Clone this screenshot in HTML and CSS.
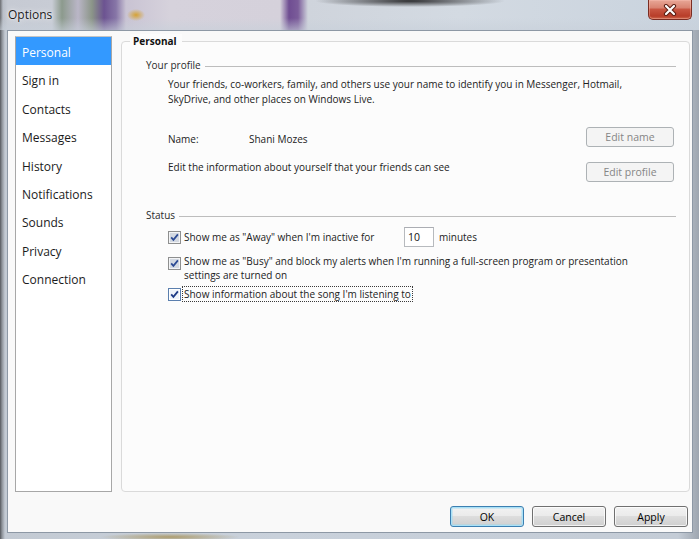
FILE: index.html
```html
<!DOCTYPE html>
<html lang="en">
<head>
<meta charset="utf-8">
<title>Options</title>
<link rel="stylesheet" href="styles.css">
</head>
<body>
<div class="window">
  <header class="titlebar">
    <span class="title">Options</span>
    <button class="close" type="button" aria-label="Close">
      <svg width="14" height="12" viewBox="0 0 14 12">
        <path d="M3 2 L11 10 M11 2 L3 10" stroke="#5a1d12" stroke-width="4.2" stroke-linecap="round" fill="none"/>
        <path d="M3 2 L11 10 M11 2 L3 10" stroke="#ffffff" stroke-width="2.2" stroke-linecap="round" fill="none"/>
      </svg>
    </button>
  </header>

  <div class="client">
    <div class="main">
      <ul class="nav">
        <li class="selected">Personal</li>
        <li>Sign in</li>
        <li>Contacts</li>
        <li>Messages</li>
        <li>History</li>
        <li>Notifications</li>
        <li>Sounds</li>
        <li>Privacy</li>
        <li>Connection</li>
      </ul>

      <section class="panel">
        <h1 class="panel-title">Personal</h1>

        <div class="group-head"><span>Your profile</span><span class="rule"></span></div>
        <div class="group-body">
          <p class="intro">Your friends, co-workers, family, and others use your name to identify you in Messenger, Hotmail,<br>SkyDrive, and other places on Windows Live.</p>
          <div class="row name-row">
            <span class="label">Name:</span>
            <span class="value">Shani Mozes</span>
            <button class="btn side disabled" type="button">Edit name</button>
          </div>
          <div class="row profile-row">
            <span class="value profile-text">Edit the information about yourself that your friends can see</span>
            <button class="btn side disabled" type="button">Edit profile</button>
          </div>
        </div>

        <div class="group-head status-head"><span>Status</span><span class="rule"></span></div>
        <div class="group-body">
          <div class="check check-away">
            <svg class="box" width="13" height="13" viewBox="0 0 13 13">
              <rect x="0.5" y="0.5" width="12" height="12" fill="#f3f4f6" stroke="#8e8f8f"/>
              <rect x="2" y="2" width="9" height="9" fill="#d3d9e2"/>
              <path d="M3.2 6.4 L5.4 8.9 L9.9 3.4" fill="none" stroke="#2b4a94" stroke-width="1.7"/>
            </svg>
            <span class="check-text away">Show me as "Away" when I'm inactive for</span>
            <input class="minutes-input" type="text" value="10">
            <span class="check-text">minutes</span>
          </div>
          <div class="check check-busy">
            <svg class="box" width="13" height="13" viewBox="0 0 13 13">
              <rect x="0.5" y="0.5" width="12" height="12" fill="#f3f4f6" stroke="#8e8f8f"/>
              <rect x="2" y="2" width="9" height="9" fill="#d3d9e2"/>
              <path d="M3.2 6.4 L5.4 8.9 L9.9 3.4" fill="none" stroke="#2b4a94" stroke-width="1.7"/>
            </svg>
            <span class="check-text">Show me as "Busy" and block my alerts when I'm running a full-screen program or presentation<br>settings are turned on</span>
          </div>
          <div class="check check-song">
            <svg class="box" width="13" height="13" viewBox="0 0 13 13">
              <rect x="0.5" y="0.5" width="12" height="12" fill="#ffffff" stroke="#5b7fae"/>
              <rect x="2" y="2" width="9" height="9" fill="#eef3fa"/>
              <path d="M3.2 6.4 L5.4 8.9 L9.9 3.4" fill="none" stroke="#1d3a86" stroke-width="1.8"/>
            </svg>
            <span class="check-text focused">Show information about the song I'm listening to</span>
          </div>
        </div>
      </section>
    </div>

    <div class="actions">
      <button class="btn action default" type="button">OK</button>
      <button class="btn action" type="button">Cancel</button>
      <button class="btn action" type="button">Apply</button>
    </div>
  </div>
</div>
</body>
</html>
```

FILE: styles.css
```css
html, body {
  margin: 0;
  padding: 0;
}

body {
  width: 699px;
  height: 539px;
  overflow: hidden;
  font-family: "Open Sans", "Noto Sans", sans-serif;
}

.window {
  width: 699px;
  height: 539px;
  display: flex;
  flex-direction: column;
  background:
    radial-gradient(ellipse 70px 4px at 170px 537px, rgba(168, 148, 92, 0.85), rgba(168, 148, 92, 0)),
    linear-gradient(to right, #55585d 0, #8d9299 2px, #c3cad3 5px, #c9d1db 40%, #c4ccd6 97%, #9ea6b0 100%);
}

.titlebar {
  height: 30px;
  flex: none;
  display: flex;
  justify-content: space-between;
  align-items: flex-start;
  padding: 0 7px 0 8px;
  background:
    radial-gradient(ellipse 9px 6px at 136px 15px, rgba(214, 160, 44, 0.95), rgba(214, 160, 44, 0)),
    radial-gradient(ellipse 95px 6px at 410px 1px, rgba(38, 38, 40, 0.95), rgba(38, 38, 40, 0)),
    linear-gradient(to bottom, rgba(255, 255, 255, 0) 60%, rgba(200, 208, 218, 0.6) 100%),
    linear-gradient(to right, #6a6c70 0, #b9bec7 3px, #c6cad3 8px, #c8ccd5 52px, #8c9a8d 62px, #bab6c7 78px, #8b9588 92px, #6c5391 104px, #8776a7 116px, #c9c3d3 126px, #d6d2dc 170px, #d5d1db 280px, #6f4d92 289px, #7b5c9a 298px, #cfd4dc 308px, #d3dae2 460px, #c9d3de 100%);
}

.title {
  margin-top: 7px;
  font-size: 12px;
  line-height: 16px;
  color: #1b1b1b;
  text-shadow: 0 0 6px rgba(255, 255, 255, 0.9), 0 0 2px rgba(255, 255, 255, 0.9);
}

.close {
  width: 44px;
  height: 20px;
  padding: 0;
  margin: 0;
  border: 1px solid #7a2c22;
  border-top: none;
  border-radius: 0 0 5px 5px;
  background: linear-gradient(to bottom, #e8a797 0, #d98472 40%, #c85541 50%, #b83d29 85%, #cf6a4e 100%);
  box-shadow: inset 0 0 0 1px rgba(255, 200, 190, 0.35);
  display: flex;
  align-items: center;
  justify-content: center;
}

.close svg {
  display: block;
}

/* Dialog client area */
.client {
  flex: 1;
  margin: 0 6px 6px 7px;
  border: 1px solid #8d98a5;
  background: #f9f9f9;
  display: flex;
  flex-direction: column;
  min-height: 0;
}

.main {
  flex: 1;
  display: flex;
  padding: 5px 2px 0 7px;
  min-height: 0;
}

/* Category list */
.nav {
  width: 97px;
  flex: none;
  box-sizing: border-box;
  margin: 0;
  padding: 0;
  list-style: none;
  background: #ffffff;
  border: 1px solid #a7a7a7;
  border-top-color: #c4c4c4;
  font-size: 12px;
}

.nav li {
  box-sizing: border-box;
  height: 28.4px;
  padding: 3px 0 0 6px;
  line-height: 25.4px;
  color: #1b1b1b;
}

.nav li.selected {
  background: #3399ff;
  color: #ffffff;
}

/* Settings page */
.panel {
  flex: 1;
  margin: 5px 0 0 9px;
  padding: 0 13px 0 24px;
  border: 1px solid #dadada;
  border-radius: 4px;
  background: #fcfcfc;
  font-size: 10px;
  color: #222222;
}

.panel-title {
  width: fit-content;
  margin: -8px 0 0 -16px;
  padding: 0 5px 0 3px;
  font-size: 10px;
  font-weight: 700;
  line-height: 14px;
  color: #111111;
  background: #fcfcfc;
}

.group-head {
  display: flex;
  align-items: center;
  gap: 4px;
  margin-top: 10px;
  line-height: 15px;
  color: #2a2a2a;
}

.rule {
  flex: 1;
  height: 0;
  margin-top: 1px;
  border-top: 1px solid #bdbdbd;
}

.status-head {
  margin-top: 26px;
}

.group-body {
  padding-left: 22px;
}

.intro {
  margin: 4px 0 0;
  line-height: 15px;
}

.row {
  display: flex;
  align-items: center;
}

.name-row {
  margin-top: 20px;
  height: 20px;
}

.name-row .label,
.name-row .value {
  padding-top: 3px;
}

.label {
  width: 81px;
  flex: none;
}

.value {
  flex: 1;
}

.profile-row {
  margin-top: 15px;
  align-items: flex-start;
}

.profile-text {
  margin-top: -2px;
  line-height: 15px;
}

/* Buttons */
.btn {
  box-sizing: border-box;
  padding: 0;
  margin: 0;
  font-family: "Open Sans", "Noto Sans", sans-serif;
  font-size: 10.5px;
  color: #000000;
  border: 1px solid #707070;
  border-radius: 3px;
  background: linear-gradient(to bottom, #f2f2f2 0, #ebebeb 45%, #dddddd 50%, #cfcfcf 100%);
  box-shadow: inset 0 0 0 1px rgba(255, 255, 255, 0.75);
}

.btn.side {
  width: 88px;
  height: 20px;
  margin-right: 2px;
  flex: none;
}

.btn.disabled {
  color: #858585;
  border-color: #adb2b5;
  background: #f4f4f4;
  box-shadow: none;
}

.btn.action {
  width: 74px;
  height: 21px;
}

.btn.default {
  border-color: #3c7fb1;
  box-shadow: inset 0 0 0 1px #a9e1f7, inset 0 0 0 2px rgba(150, 215, 240, 0.35);
}

/* Status checkboxes */
.check {
  display: flex;
  align-items: center;
  line-height: 14px;
}

.check .box {
  flex: none;
  display: block;
  margin-right: 3px;
}

.check-away {
  margin-top: 4px;
  height: 20px;
}

.away {
  width: 220px;
  flex: none;
}

.minutes-input {
  box-sizing: border-box;
  width: 30px;
  height: 20px;
  margin: 0 5px 0 0;
  padding: 0 0 0 3px;
  border: 1px solid #b7babe;
  border-top-color: #abadb3;
  background: #ffffff;
  font-family: "Open Sans", "Noto Sans", sans-serif;
  font-size: 10.5px;
  color: #111111;
  outline: none;
}

.check-busy {
  margin-top: 7px;
  align-items: flex-start;
}

.check-busy .box {
  margin-top: 3px;
}

.check-song {
  margin-top: 5px;
}

.check-song .box {
  margin-right: 2px;
}

.focused {
  outline: 1px dotted #3a3a3a;
  padding: 0 1px;
}

/* Dialog buttons */
.actions {
  flex: none;
  display: flex;
  justify-content: flex-end;
  gap: 8px;
  padding: 14px 4px 5px 0;
}
```
